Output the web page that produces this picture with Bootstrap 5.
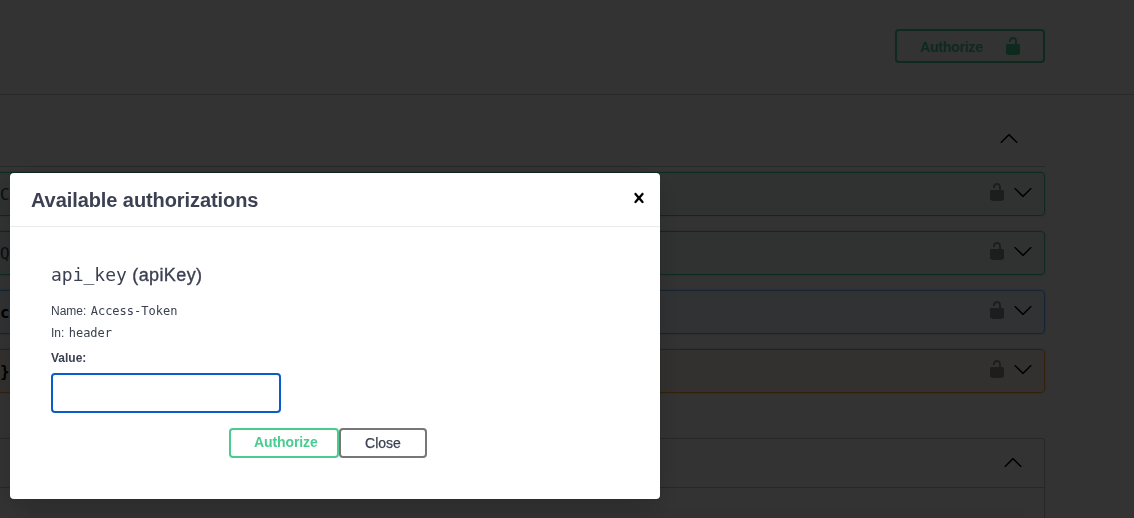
<!DOCTYPE html>
<html lang="en">
<head>
<meta charset="utf-8">
<title>Available authorizations</title>
<link href="https://cdn.jsdelivr.net/npm/bootstrap@5.3.0/dist/css/bootstrap.min.css" rel="stylesheet">
<style>
html, body { height: 100%; }
body { background: #fff; overflow: hidden; font-family: "Liberation Sans", Arial, sans-serif; color: #3b4151; }
.spec-top { height: 95px; padding: 29px 89px 0 0; border-bottom: 1px solid rgba(59,65,81,.3); }
.spec-auth { width: 150px; height: 34px; padding: 0 0 0 23px; border: 2px solid #49cc90; border-radius: 4px; background: transparent; color: #49cc90; font-size: 14px; font-weight: 700; letter-spacing: -.2px; }
.spec-auth span { width: 83px; padding-top: 2px; text-align: left; }
.spec-auth svg { fill: #49cc90; }
.spec-section { margin: 0 89px 0 -30px; }
.spec-head { height: 72px; padding: 34px 26px 0 0; border-bottom: 1px solid rgba(59,65,81,.3); }
.spec-stack { margin-top: 5px; gap: 15px; }
.spec-row { height: 44px; padding-right: 11px; border: 1px solid; border-radius: 4px; box-shadow: 0 0 3px rgba(0,0,0,.19); }
.spec-green { border-color: #49cc90; background: rgba(73,204,144,.1); }
.spec-blue { border-color: #61affe; background: rgba(97,175,254,.1); }
.spec-orange { border-color: #fca130; background: rgba(252,161,48,.1); }
.spec-path { padding: 12px 0 0 29px; width: 60px; overflow: hidden; white-space: nowrap; font: 16px/20px "DejaVu Sans Mono", monospace; color: #3b4151; }
.spec-path-strong { font-weight: 700; color: #000; }
.spec-lock { margin-top: 9px; fill: #000; opacity: .4; }
.spec-caret { margin: 9px 0 0 6px; fill: #000; }
.spec-box { margin-top: 45px; height: 80px; border: 1px solid rgba(59,65,81,.3); border-bottom: 0; border-radius: 4px 4px 0 0; box-shadow: 0 0 3px rgba(0,0,0,.1); }
.spec-box-head { height: 49px; padding: 14px 21px 0 0; border-bottom: 1px solid rgba(59,65,81,.3); }
.spec-box-inner { height: 11px; margin: 19px 20px 0 57px; background: rgba(0,0,0,.03); }
.auth-veil { position: fixed; inset: 0; background: rgba(0,0,0,.8); }
.auth-panel { position: absolute; left: 10px; top: 173px; width: 650px; border: 0; border-radius: 4px; background: #fff; box-shadow: 0 10px 30px -2px rgba(0,0,0,.2); color: #3b4151; }
.auth-panel .modal-header { height: 54px; padding: 0 11px 0 21px; border-bottom: 1px solid #ebebeb; border-radius: 4px 4px 0 0; }
.auth-title { margin: 0; font-size: 20px; line-height: 24px; font-weight: 700; letter-spacing: -.08px; color: #3b4151; }
.auth-x { padding: 0; border: 0; background: none; line-height: 0; margin-top: -4px; }
.auth-body { padding: 37px 41px 41px; }
.auth-h { margin: 0 0 16px; font-size: 18px; line-height: 22px; font-weight: 400; letter-spacing: .4px; color: #3b4151; -webkit-text-stroke: .35px #3b4151; }
.auth-mono { font-family: "DejaVu Sans Mono", monospace; letter-spacing: 0; -webkit-text-stroke: 0; }
.auth-line { margin: 0 0 4px; font-size: 12px; line-height: 18px; }
.auth-line .auth-mono { margin-left: 1px; }
.auth-label { display: block; margin: 9px 0 7px; font-size: 12px; line-height: 15px; font-weight: 700; }
.auth-input.form-control { width: 230px; height: 40px; padding: 8px 10px; border: 2px solid #0a5ccc; border-radius: 4px; box-shadow: none; }
.auth-actions { margin: 15px 0 0 178px; }
.auth-btn { height: 30px; padding: 0; border: 2px solid; border-radius: 4px; background: #fff; font-size: 14px; line-height: 1; }
.auth-go { width: 110px; padding: 0 0 2px 23px; text-align: left; border-color: #49cc90; color: #49cc90; font-weight: 700; letter-spacing: -.1px; }
.auth-close { width: 88px; border-color: #777; color: #3b4151; -webkit-text-stroke: .25px #3b4151; }
.auth-btn:hover, .auth-btn:active { background: #fff; }
</style>
</head>
<body>
<svg width="0" height="0" class="position-absolute">
  <symbol id="ico-lock" viewBox="0 0 20 20"><path d="M15.8 8H14V5.6C14 2.703 12.665 1 10 1 7.334 1 6 2.703 6 5.6V6h2v-.801C8 3.754 8.797 3 10 3c1.203 0 2 .754 2 2.199V8H4c-.553 0-1 .646-1 1.199V17c0 .549.428 1.139.951 1.307l1.197.387C5.672 18.861 6.55 19 7.1 19h5.8c.549 0 1.428-.139 1.951-.307l1.196-.387c.524-.167.953-.757.953-1.306V9.199C17 8.646 16.352 8 15.8 8z"/></symbol>
  <symbol id="ico-down" viewBox="0 0 20 20"><path d="M17.418 6.109c.272-.268.709-.268.979 0s.271.701 0 .969l-7.908 7.83c-.27.268-.707.268-.979 0l-7.908-7.83c-.27-.268-.27-.701 0-.969.271-.268.709-.268.979 0L10 13.25l7.418-7.141z"/></symbol>
  <symbol id="ico-up" viewBox="0 0 20 20"><path transform="matrix(1 0 0 -1 0 20)" d="M17.418 6.109c.272-.268.709-.268.979 0s.271.701 0 .969l-7.908 7.83c-.27.268-.707.268-.979 0l-7.908-7.83c-.27-.268-.27-.701 0-.969.271-.268.709-.268.979 0L10 13.25l7.418-7.141z"/></symbol>
  <symbol id="ico-x" viewBox="0 0 20 20"><path d="M14.348 14.849c-.469.469-1.229.469-1.697 0L10 11.819l-2.651 3.029c-.469.469-1.229.469-1.697 0-.469-.469-.469-1.229 0-1.697l2.758-3.15-2.759-3.152c-.469-.469-.469-1.228 0-1.697.469-.469 1.228-.469 1.697 0L10 8.183l2.651-3.031c.469-.469 1.228-.469 1.697 0 .469.469.469 1.229 0 1.697l-2.758 3.152 2.758 3.15c.469.469.469 1.229 0 1.698z"/></symbol>
</svg>

<main>
  <div class="spec-top d-flex justify-content-end align-items-start">
    <button type="button" class="spec-auth d-flex align-items-center">
      <span>Authorize</span>
      <svg width="20" height="20"><use href="#ico-lock"/></svg>
    </button>
  </div>
  <section class="spec-section">
    <div class="spec-head d-flex justify-content-end">
      <svg width="20" height="20"><use href="#ico-up"/></svg>
    </div>
    <div class="spec-stack d-flex flex-column">
      <div class="spec-row spec-green d-flex">
        <div class="spec-path">Cc</div>
        <svg width="20" height="20" class="spec-lock ms-auto"><use href="#ico-lock"/></svg>
        <svg width="20" height="20" class="spec-caret"><use href="#ico-down"/></svg>
      </div>
      <div class="spec-row spec-green d-flex">
        <div class="spec-path">QP</div>
        <svg width="20" height="20" class="spec-lock ms-auto"><use href="#ico-lock"/></svg>
        <svg width="20" height="20" class="spec-caret"><use href="#ico-down"/></svg>
      </div>
      <div class="spec-row spec-blue d-flex">
        <div class="spec-path spec-path-strong">c</div>
        <svg width="20" height="20" class="spec-lock ms-auto"><use href="#ico-lock"/></svg>
        <svg width="20" height="20" class="spec-caret"><use href="#ico-down"/></svg>
      </div>
      <div class="spec-row spec-orange d-flex">
        <div class="spec-path spec-path-strong">}</div>
        <svg width="20" height="20" class="spec-lock ms-auto"><use href="#ico-lock"/></svg>
        <svg width="20" height="20" class="spec-caret"><use href="#ico-down"/></svg>
      </div>
    </div>
    <div class="spec-box">
      <div class="spec-box-head d-flex justify-content-end">
        <svg width="20" height="20"><use href="#ico-up"/></svg>
      </div>
      <div class="spec-box-inner"></div>
    </div>
  </section>
</main>

<div class="auth-veil">
  <div class="auth-panel modal-content" role="dialog" aria-label="Available authorizations">
    <div class="modal-header d-flex justify-content-between align-items-center">
      <h3 class="auth-title">Available authorizations</h3>
      <button type="button" class="auth-x" aria-label="Close">
        <svg width="20" height="20"><use href="#ico-x"/></svg>
      </button>
    </div>
    <div class="auth-body">
      <h4 class="auth-h"><span class="auth-mono">api_key</span> (apiKey)</h4>
      <p class="auth-line">Name: <span class="auth-mono">Access-Token</span></p>
      <p class="auth-line">In: <span class="auth-mono">header</span></p>
      <label class="auth-label" for="auth-value">Value:</label>
      <input id="auth-value" class="auth-input form-control" type="text" aria-label="Value">
      <div class="auth-actions d-flex">
        <button type="button" class="auth-btn auth-go">Authorize</button>
        <button type="button" class="auth-btn auth-close">Close</button>
      </div>
    </div>
  </div>
</div>
<script src="https://cdn.jsdelivr.net/npm/bootstrap@5.3.0/dist/js/bootstrap.bundle.min.js"></script>
</body>
</html>
